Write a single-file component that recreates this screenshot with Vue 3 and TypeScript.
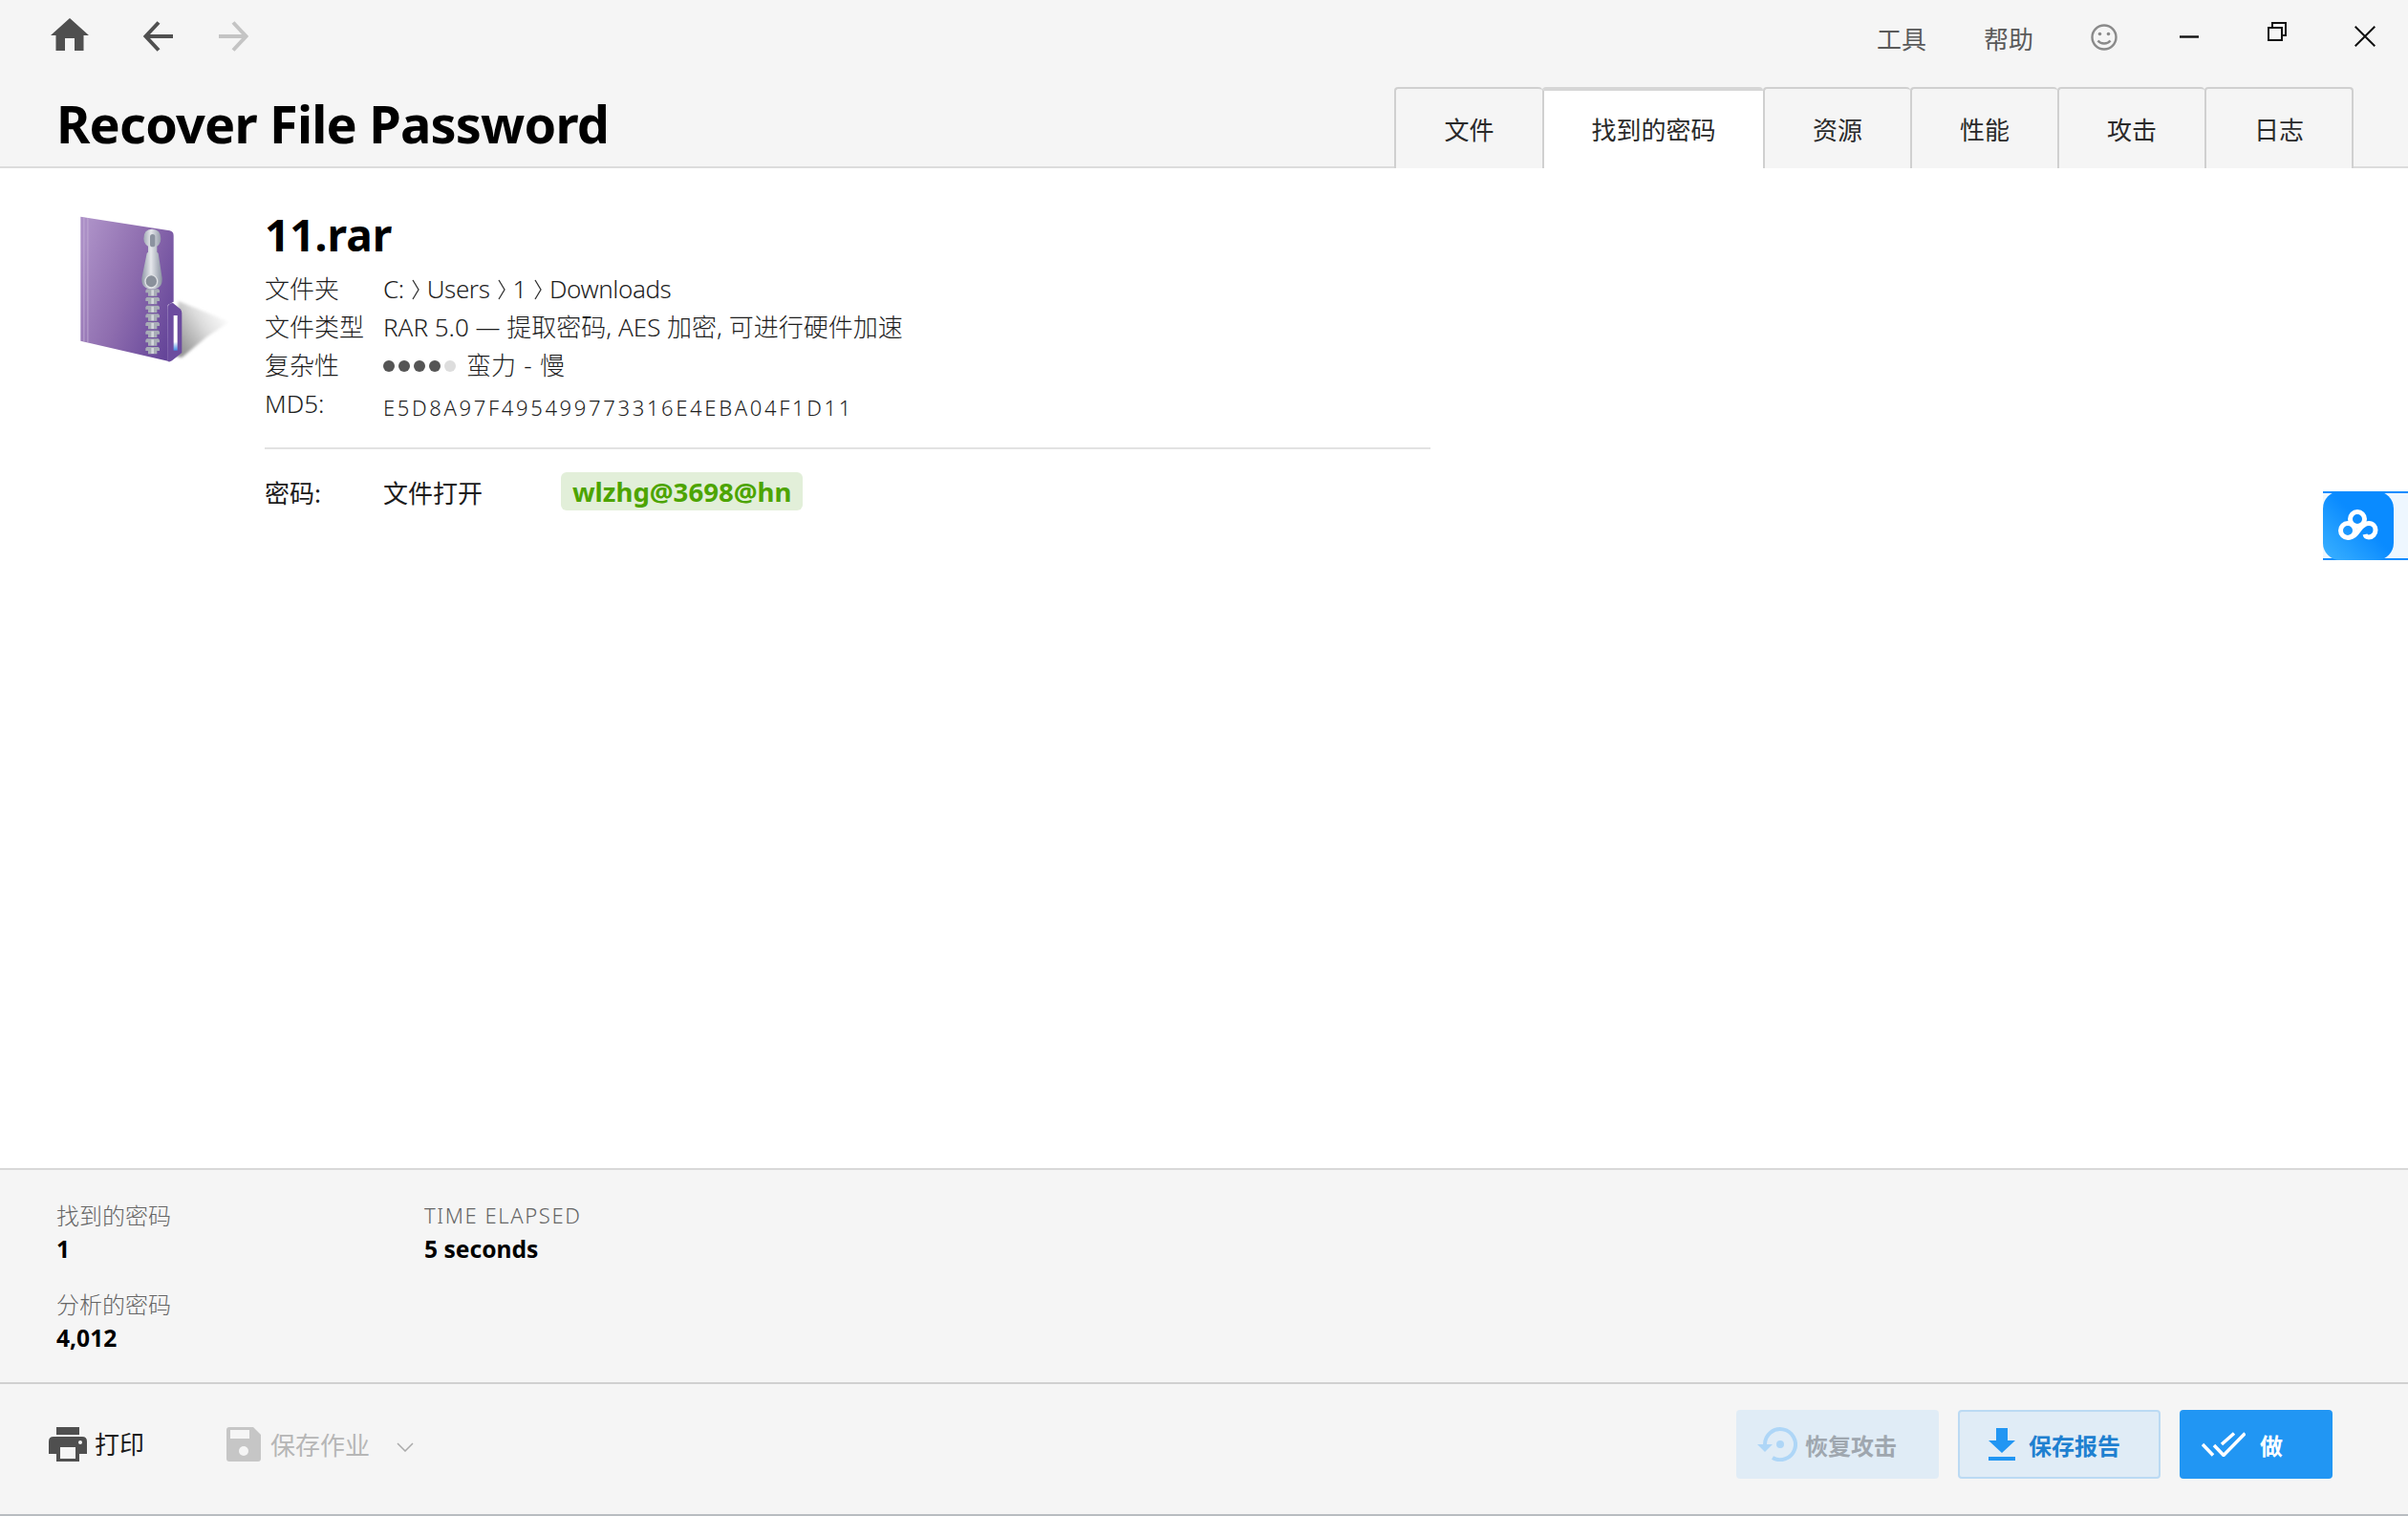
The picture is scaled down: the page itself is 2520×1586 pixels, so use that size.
<script setup lang="ts">
const tabs = [
  { label: '文件', active: false },
  { label: '找到的密码', active: true },
  { label: '资源', active: false },
  { label: '性能', active: false },
  { label: '攻击', active: false },
  { label: '日志', active: false },
]
const dots = [true, true, true, true, false]
const teeth = [262, 288, 314, 340, 366, 392, 418, 444]
const pathParts = ['C:', 'Users', '1', 'Downloads']
</script>

<template>
  <div class="app">
    <header class="header">
      <div class="top-row">
        <nav class="nav-icons">
          <svg class="home" viewBox="0 0 40 34" width="40" height="34"><path fill="#4f4f4f" d="M20 0 40 18H34.500V34H25V21H15V34H5.500V18H0Z"/></svg>
          <svg class="arrow" viewBox="0 0 32 32" width="32" height="32"><path fill="none" stroke="#505050" stroke-width="4" d="M17 1.500 3.500 16 17 30.500M3.500 16H32"/></svg>
          <svg class="arrow" viewBox="0 0 32 32" width="32" height="32"><path fill="none" stroke="#c4c4c4" stroke-width="4" d="M15 1.500 28.500 16 15 30.500M28.500 16H0"/></svg>
        </nav>
        <div class="top-right">
          <span class="menu">工具</span>
          <span class="menu menu-b">帮助</span>
          <svg class="smile" viewBox="0 0 28 28" width="28" height="28"><g fill="none" stroke="#8a8a8a" stroke-width="2.400"><circle cx="14" cy="14" r="12.500"/><path d="M7.500 17.500c3 4 10 4 13 0"/></g><circle cx="9.500" cy="10.500" r="1.800" fill="#8a8a8a"/><circle cx="18.500" cy="10.500" r="1.800" fill="#8a8a8a"/></svg>
          <svg class="minimize" viewBox="0 0 20 3" width="20" height="3"><path d="M0 1.500H20" stroke="#111" stroke-width="2.400"/></svg>
          <svg class="restore" viewBox="0 0 20 20" width="20" height="20"><path fill="none" stroke="#111" stroke-width="2" d="M1 6H15V19H1ZM5 6V1H19V14H15"/></svg>
          <svg class="close" viewBox="0 0 22 22" width="22" height="22"><path fill="none" stroke="#111" stroke-width="2" d="M.7.700 21.300 21.300M21.300.700.700 21.300"/></svg>
        </div>
      </div>
      <div class="title-row">
        <h1 class="title">Recover File Password</h1>
        <div class="tabs">
          <div v-for="tab in tabs" :key="tab.label" class="tab" :class="{ active: tab.active }">{{ tab.label }}</div>
        </div>
      </div>
    </header>

    <main class="main">
      <svg class="folder" viewBox="0 0 510 525" width="170" height="175">
        <defs>
          <linearGradient id="fg" x1="0" y1="0.25" x2="1" y2="0.8">
            <stop offset="0" stop-color="#ab8fc6"/>
            <stop offset="0.5" stop-color="#8d6cae"/>
            <stop offset="1" stop-color="#654599"/>
          </linearGradient>
          <linearGradient id="sh" gradientUnits="userSpaceOnUse" x1="345" y1="445" x2="490" y2="350">
            <stop offset="0" stop-color="#999999"/>
            <stop offset="0.55" stop-color="#dddddd"/>
            <stop offset="1" stop-color="#ffffff"/>
          </linearGradient>
          <linearGradient id="zp" x1="0" y1="0" x2="1" y2="0">
            <stop offset="0" stop-color="#8f97a6"/>
            <stop offset="0.45" stop-color="#e6e8ec"/>
            <stop offset="1" stop-color="#8a92a1"/>
          </linearGradient>
          <linearGradient id="bl" x1="0" y1="0" x2="0" y2="1">
            <stop offset="0" stop-color="#ffffff"/>
            <stop offset="0.75" stop-color="#ffffff"/>
            <stop offset="1" stop-color="#3f8ce6"/>
          </linearGradient>
          <filter id="bs" x="-20%" y="-20%" width="140%" height="140%"><feGaussianBlur stdDeviation="5"/></filter>
        </defs>
        <path fill="url(#sh)" filter="url(#bs)" d="M335 300 495 365 425 412 345 478 320 470Z"/>
        <path fill="url(#fg)" d="M28 35 308 79Q320 82 320 95V302L302 312V488L28 425Z"/>
        <path fill="#c3aed6" opacity=".5" d="M36 37 41 38V427L36 426ZM48 39 53 40V430L48 429Z"/>
        <path fill="#6c4c9f" d="M302 320Q303 306 318 306L341 325Q346 330 346 338V462L315 487Q306 493 301 488Z"/>
        <rect x="320" y="345" width="12" height="110" fill="url(#bl)"/>
        <g>
          <g v-for="y in teeth" :key="y">
            <path fill="#a8adb6" d="M236 0H272L276 4V12H268V22H240V12H232V4Z" :transform="`translate(0 ${y})`"/>
            <rect x="250" :y="y + 3" width="8" height="18" fill="#d4d7dc"/>
          </g>
        </g>
        <path fill="url(#zp)" d="M226 104Q226 74 252 74 280 74 280 104 280 120 268 128V146L272 150 284 228Q286 262 252 262 218 262 220 228L236 150 240 146V128Q226 120 226 104Z"/>
        <ellipse cx="250" cy="238" rx="19" ry="20" fill="#8a909b" stroke="#dfe1e5" stroke-width="4"/>
        <rect x="246" y="90" width="16" height="40" rx="8" fill="#8c93a0"/>
      </svg>
      <section class="info">
        <h2 class="file-name">11.rar</h2>
        <div class="rows">
          <div class="row">
            <span class="key">文件夹</span>
            <span class="val path">
              <template v-for="(part, i) in pathParts" :key="part">
                <svg v-if="i > 0" class="sep" viewBox="0 0 8 22" width="8" height="22"><path fill="none" stroke="#333" stroke-width="1.300" d="M1 1 7 11 1 21"/></svg>
                <span>{{ part }}</span>
              </template>
            </span>
          </div>
          <div class="row"><span class="key">文件类型</span><span class="val">RAR 5.0 — 提取密码, AES 加密, 可进行硬件加速</span></div>
          <div class="row">
            <span class="key">复杂性</span>
            <span class="val complexity">
              <span class="dots"><i v-for="(on, i) in dots" :key="i" class="dot" :class="{ on }"></i></span>
              <span class="speed">蛮力 - 慢</span>
            </span>
          </div>
          <div class="row"><span class="key">MD5:</span><span class="val md5">E5D8A97F495499773316E4EBA04F1D11</span></div>
        </div>
        <div class="divider"></div>
        <div class="pw-row">
          <span class="key pw-key">密码:</span>
          <span class="pw-type">文件打开</span>
          <span class="pw">wlzhg@3698@hn</span>
        </div>
      </section>
      <div class="cloud-badge">
        <div class="cloud-square">
          <svg viewBox="0 0 42 34" width="42" height="34"><g fill="none" stroke="#fff" stroke-width="5"><circle cx="20" cy="10" r="7.500"/><circle cx="10" cy="22" r="7.500"/><path d="M10 29.500c6 0 9-4.500 12-8.500 3-4 6-6.500 10-6.500 4.500 0 7 3.500 7 7 0 4-3 7.500-7 7.500-2 0-3.500-1-4-3"/></g></svg>
        </div>
      </div>
    </main>

    <section class="stats">
      <div class="stat-col first">
        <div class="stat"><div class="stat-label">找到的密码</div><div class="stat-value">1</div></div>
        <div class="stat"><div class="stat-label">分析的密码</div><div class="stat-value">4,012</div></div>
      </div>
      <div class="stat-col">
        <div class="stat"><div class="stat-label spaced">TIME ELAPSED</div><div class="stat-value">5 seconds</div></div>
      </div>
    </section>

    <footer class="footer">
      <div class="foot-left">
        <div class="action print">
          <svg viewBox="0 0 40 36" width="40" height="36"><path fill="#4f4f4f" d="M8 0H32V8H8ZM5 10H35Q40 10 40 15V28H32V36H8V28H0V15Q0 10 5 10Z"/><rect x="12" y="21" width="16" height="12" fill="#f5f5f5"/><circle cx="33" cy="16" r="2" fill="#f5f5f5"/></svg>
          <span>打印</span>
        </div>
        <div class="action save">
          <svg viewBox="0 0 36 36" width="36" height="36"><path fill="#c6c6c6" d="M3 0H28L36 8V33Q36 36 33 36H3Q0 36 0 33V3Q0 0 3 0Z"/><rect x="4" y="3" width="20" height="9" fill="#f5f5f5"/><circle cx="18" cy="25" r="5" fill="#f5f5f5"/></svg>
          <span>保存作业</span>
          <svg class="chev" viewBox="0 0 18 10" width="18" height="10"><path fill="none" stroke="#aaa" stroke-width="1.500" d="M1 1 9 9 17 1"/></svg>
        </div>
      </div>
      <div class="foot-right">
        <button class="btn restore-btn">
          <svg viewBox="0 0 42 36" width="42" height="36"><path fill="none" stroke="#aed6f7" stroke-width="4" d="M8 18A16 16 0 1 1 16 32"/><path fill="#aed6f7" d="M0 18H16L8 26Z"/><circle cx="24" cy="18" r="4" fill="#aed6f7"/></svg>
          <span>恢复攻击</span>
        </button>
        <button class="btn save-btn">
          <svg viewBox="0 0 28 34" width="28" height="34"><path fill="#2196f3" d="M8 0H20V13H28L14 26 0 13H8ZM0 30H28V34H0Z"/></svg>
          <span>保存报告</span>
        </button>
        <button class="btn done-btn">
          <svg viewBox="0 0 46 26" width="46" height="26"><path fill="none" stroke="#fff" stroke-width="3.500" d="M1 13 12 24.500M13 14 23 24.500 45.500 1.500M21 13 34 1.500"/></svg>
          <span>做</span>
        </button>
      </div>
    </footer>
  </div>
</template>

<style>
html, body { margin: 0; padding: 0; background: #fff; }
</style>

<style scoped>
.app {
  width: 2520px;
  height: 1586px;
  display: flex;
  flex-direction: column;
  overflow: hidden;
  color: #1c1c1c;
  font-family: "Noto Sans", "Noto Sans CJK SC", "DejaVu Sans", sans-serif;
  font-size: 26px;
  position: relative;
}
.header {
  height: 176px;
  box-sizing: border-box;
  background: #f5f5f5;
  border-bottom: 2px solid #dcdcdc;
  display: flex;
  flex-direction: column;
}
.top-row {
  height: 91px;
  display: flex;
  justify-content: space-between;
  padding: 18px 34px 0 53px;
  box-sizing: border-box;
}
.nav-icons { display: flex; gap: 48px; align-items: flex-start; }
.arrow { margin-top: 4px; }
.nav-icons .home { margin-right: 8px; margin-top: 1px; }
.top-right { display: flex; align-items: flex-start; color: #5a5a5a; }
.menu { line-height: 40px; margin-top: 3px; }
.menu-b { margin-left: 60px; }
.smile { margin-left: 60px; margin-top: 7px; }
.minimize { margin-left: 65px; margin-top: 19px; }
.restore { margin-left: 72px; margin-top: 5px; }
.close { margin-left: 71px; margin-top: 9px; }
.title-row {
  flex: 1;
  display: flex;
  justify-content: space-between;
  padding: 0 57px 0 59px;
}
.title {
  margin: 2px 0 0;
  font-size: 54px;
  line-height: 72px;
  font-weight: 700;
  color: #000;
  letter-spacing: -0.8px;
}
.tabs { display: flex; margin-bottom: -2px; }
.tab {
  width: 154px;
  box-sizing: border-box;
  text-align: center;
  border: 2px solid #d0d0d0;
  border-bottom: 0;
  border-right: 0;
  border-radius: 4px 4px 0 0;
  padding-top: 23px;
  line-height: 40px;
  color: #2a2a2a;
  background: #f5f5f5;
}
.tab:first-child { width: 155px; }
.tab:last-child { border-right: 2px solid #d0d0d0; width: 156px; }
.tab.active {
  width: 231px;
  background: #fff;
  border-top: 4px solid #d6d6d6;
  padding-top: 21px;
}
.main {
  flex: 1;
  background: #fff;
  position: relative;
  display: flex;
  padding: 48px 0 0 75px;
}
.folder { margin-top: -9px; flex: none; }
.info { margin-left: 32px; width: 1220px; }
.file-name {
  margin: -8px 0 0;
  font-size: 46px;
  line-height: 58px;
  font-weight: 700;
  color: #000;
}
.rows { margin-top: 8px; }
.row { display: flex; height: 40px; line-height: 40px; font-weight: 300; color: #1e1e1e; }
.key { width: 124px; flex: none; }
.val { white-space: nowrap; }
.path { display: flex; align-items: center; gap: 8px; letter-spacing: -0.4px; }
.sep { flex: none; margin-top: 2px; }
.complexity { display: flex; align-items: center; gap: 11px; }
.speed { word-spacing: 1.500px; }
.dots { display: flex; gap: 4px; margin-top: 2px; }
.dot { width: 12px; height: 12px; border-radius: 50%; background: #dddddd; }
.dot.on { background: #555; }
.md5 { font-size: 22px; letter-spacing: 2.650px; padding-top: 4px; }
.divider { height: 2px; background: #e2e2e2; margin-top: 26px; width: 1220px; }
.pw-row { display: flex; align-items: center; margin-top: 24px; height: 40px; }
.pw-key, .pw-type { padding-top: 2px; }
.pw-type { width: 186px; }
.pw {
  background: #e2efd9;
  color: #4da400;
  font-size: 27.600px;
  font-weight: 700;
  padding: 0 12px;
  border-radius: 6px;
  line-height: 40px;
}
.cloud-badge {
  position: absolute;
  top: 338px;
  right: 0;
  width: 89px;
  height: 72px;
  box-sizing: border-box;
  background: #eef7ff;
  border: solid #0e8cff;
  border-width: 2px 0;
}
.cloud-square {
  position: absolute;
  left: 0;
  top: -2px;
  width: 74px;
  height: 72px;
  border-radius: 18px;
  background: linear-gradient(45deg, #3cb2ff, #0a8bff 55%);
  display: flex;
  align-items: center;
  justify-content: center;
}
.stats {
  height: 224px;
  box-sizing: border-box;
  background: #f5f5f5;
  border-top: 2px solid #d8d8d8;
  padding: 32px 0 0 59px;
  display: flex;
}
.stat-col { display: flex; flex-direction: column; gap: 22px; }
.stat-col.first { width: 385px; }
.stat-label { font-size: 24px; line-height: 31px; color: #666; font-weight: 300; }
.stat-label.spaced { font-size: 22px; letter-spacing: 1.600px; }
.stat-value { font-size: 24.600px; line-height: 40px; font-weight: 700; color: #000; }
.footer {
  height: 140px;
  box-sizing: border-box;
  background: #f5f5f5;
  border-top: 2px solid #d0d0d0;
  border-bottom: 2px solid #b8bcc0;
  display: flex;
  justify-content: space-between;
  padding: 0 79px 0 51px;
}
.foot-left { display: flex; align-items: flex-start; padding-top: 44px; }
.action { display: flex; align-items: center; gap: 8px; }
.action span { margin-top: -1px; }
.print { color: #1c1c1c; }
.save { color: #b6b6b6; margin-left: 86px; gap: 10px; }
.save span { margin-top: 0; }
.chev { margin-left: 18px; margin-top: 6px; }
.foot-right { display: flex; gap: 20px; padding-top: 27px; }
.btn {
  height: 72px;
  width: 212px;
  box-sizing: border-box;
  border: 2px solid transparent;
  border-radius: 4px;
  display: flex;
  align-items: center;
  font-family: inherit;
  font-size: 24px;
  font-weight: 700;
  padding: 0;
}
.restore-btn { background: #e0ecf6; color: #9fa7af; padding-left: 20px; gap: 8px; }
.save-btn { background: #e0ecf6; border-color: #bbdaf3; color: #1e80d0; padding-left: 30px; gap: 14px; }
.done-btn { width: 160px; background: #2196f3; color: #fff; padding-left: 21px; gap: 15px; }
</style>
